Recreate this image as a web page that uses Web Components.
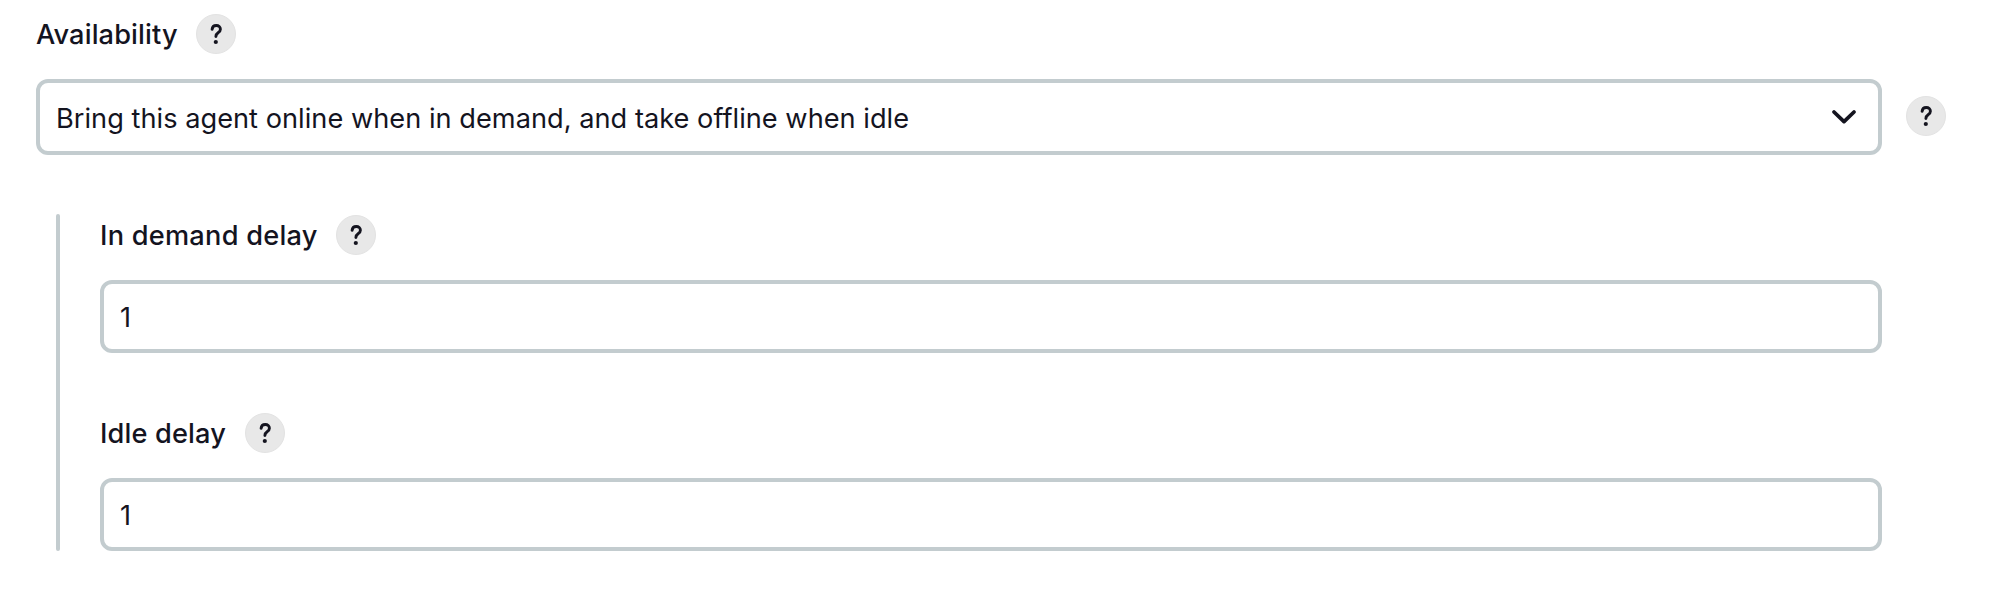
<!DOCTYPE html>
<html lang="en">
<head>
<meta charset="utf-8">
<title>Agent availability</title>
<style>
body{margin:0;background:#fff;color:#14141f;font:400 27.2px/40px Inter,"Liberation Sans",sans-serif}
</style>
</head>
<body>
<availability-form></availability-form>
<script>
const define=(name,html)=>customElements.define(name,class extends HTMLElement{
  constructor(){super();this.attachShadow({mode:"open"}).innerHTML=html}
});
define("help-button",`<style>
:host{display:block;flex:none;width:40px;height:40px}
div{box-sizing:border-box;width:40px;height:40px;border-radius:50%;background:#e8e8e8;border:1px solid #e3e3e3}
svg{display:block;margin:-1px}
</style><div role="button" aria-label="Help"><svg width="40" height="40" viewBox="0 0 40 40" fill="none">
<path d="M16.1 15.3C16.3 13 17.9 11.5 20.3 11.5C22.7 11.5 24.4 13 24.4 15.2C24.4 16.9 23.5 17.8 22.1 18.7C20.5 19.8 19.9 20.7 19.9 22.5" stroke="#14141f" stroke-width="2.9" stroke-linecap="round" stroke-linejoin="round"/><circle cx="19.8" cy="28" r="2.1" fill="#14141f"/></svg></div>`);
define("form-label",`<style>
:host{display:flex;align-items:center;gap:20px;height:40px}
span{font-weight:500;white-space:nowrap;letter-spacing:var(--track,0);width:var(--w,auto);padding-top:var(--drop,2px)}
</style><span><slot></slot></span><help-button></help-button>`);
define("text-box",`<style>
:host{display:flex;align-items:center;box-sizing:border-box;height:73px;border:4px solid #c3cccf;border-radius:12px;padding:3px 16px 0 16px;background:#fff}
</style><span><slot></slot></span>`);
define("select-box",`<style>
:host{display:flex;align-items:center;justify-content:space-between;box-sizing:border-box;flex:1;height:76px;border:4px solid #c3cccf;border-radius:12px;padding:0 20px 0 16px;background:#fff}
span{white-space:nowrap;padding-top:4px;letter-spacing:.02px}
svg{display:block}
</style><span><slot></slot></span><svg width="28" height="20" viewBox="0 0 28 20" fill="none"><path d="M4 5L14 14.6L24 5" stroke="#14141f" stroke-width="3.8" stroke-linecap="round" stroke-linejoin="round"/></svg>`);
define("nested-group",`<style>
:host{display:flex;gap:40px;margin:59px 0 0 20px}
i{width:4px;border-radius:2px;background:#c3cccf}
div{flex:1;display:grid;gap:60px;padding-top:1px}
</style><i></i><div><slot></slot></div>`);
define("form-field",`<style>
:host{display:grid;gap:25px}
</style><slot name="label"></slot><slot></slot>`);
define("availability-form",`<style>
:host{display:block;padding:14px 60px 0 36px}
.row{display:flex;align-items:center;gap:24px}
.row help-button{margin-bottom:2px}
nested-group{margin-right:64px}
.main{--w:140px;--track:.12px;--drop:1px}
.demand{--w:216px;--track:.24px}
.idle{--w:125px;--track:.15px}
</style>
<form-field><form-label slot="label" class="main">Availability</form-label>
<div class="row"><select-box>Bring this agent online when in demand, and take offline when idle</select-box><help-button></help-button></div></form-field>
<nested-group>
<form-field><form-label slot="label" class="demand">In demand delay</form-label><text-box>1</text-box></form-field>
<form-field><form-label slot="label" class="idle">Idle delay</form-label><text-box>1</text-box></form-field>
</nested-group>`);
</script>
</body>
</html>
